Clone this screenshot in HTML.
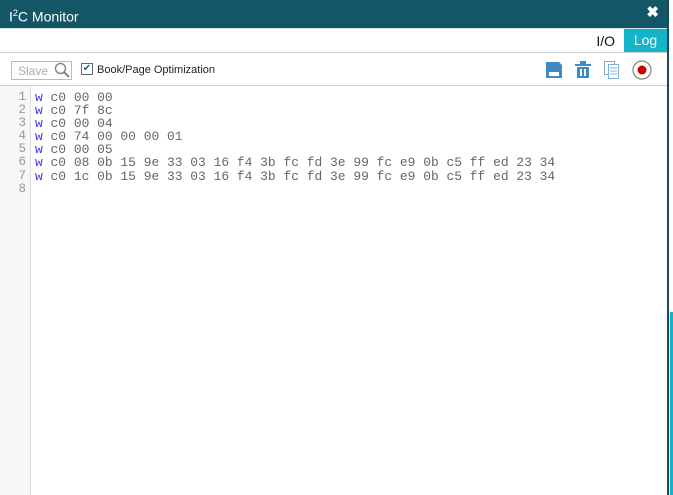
<!DOCTYPE html>
<html><head><style>
body{margin:0;width:673px;height:495px;overflow:hidden;background:#fff;position:relative;font-family:"Liberation Sans",sans-serif}
.win{position:absolute;left:0;top:0;width:667px;height:495px;border-right:2px solid #1a4a55;background:#fff}
.title{height:28px;background:#135666;color:#fff;font-size:14px;line-height:26px;padding-left:9px}
.title sup{font-size:9px}
.x{position:absolute;right:8px;top:0;font-size:15px;font-weight:bold;color:#fff}
.tabs{position:absolute;top:28px;left:0;right:0;height:23px;border-top:1px solid #cfe5ea;border-bottom:1px solid #ccc;background:#fff}
.io{position:absolute;right:52px;top:4px;font-size:14px;color:#111}
.log{position:absolute;right:0;top:0;width:43px;height:23px;background:#14b4c9;color:#fff;font-size:14px;line-height:23px;text-align:center}
.tool{position:absolute;top:53px;left:0;right:0;height:32px;border-bottom:1px solid #ccc}
.slave{position:absolute;left:11px;top:8px;width:61px;height:19px;border:1px solid #bbb;font-size:12px;color:#aaa;line-height:19px;padding-left:6px;box-sizing:border-box}
.cb{position:absolute;left:81px;top:10px;width:10px;height:10px;border:1px solid #666;font-size:10px;line-height:10px;color:#1a5f8a;text-align:center}
.cbl{position:absolute;left:97px;top:11px;font-size:11px;color:#222}
.gut{position:absolute;left:0;top:86px;width:30px;bottom:0;background:#f7f7f7;border-right:1px solid #ddd}
.code{position:absolute;top:91px;font-family:"Liberation Mono",monospace;font-size:12.95px;line-height:13.1px;white-space:pre;color:#666}
.code b{font-weight:normal;color:#3b3bf0}
</style></head><body>
<div class="win">
<div class="title">I<sup>2</sup>C Monitor<span class="x">✖</span></div>
<div class="tabs"><span class="io">I/O</span><div class="log">Log</div></div>
<div class="tool">
<div class="slave">Slave</div>
<svg style="position:absolute;left:54px;top:9px" width="16" height="16"><circle cx="6.5" cy="6.5" r="5" fill="none" stroke="#888" stroke-width="1.5"/><line x1="10" y1="10" x2="15" y2="15" stroke="#888" stroke-width="2"/></svg>
<div class="cb">✔</div><span class="cbl">Book/Page Optimization</span>
<svg style="position:absolute;left:546px;top:9px" width="16" height="16"><path d="M0 0h13l3 3v13H0z" fill="#3d8ac7"/><rect x="3" y="10" width="10" height="4" fill="#fff"/></svg>
<svg style="position:absolute;left:575px;top:8px" width="16" height="17"><rect x="0" y="3" width="16" height="2" fill="#3d8ac7"/><rect x="5" y="0" width="6" height="3" fill="#3d8ac7"/><path d="M2 6h12v11H2z" fill="#3d8ac7"/><rect x="5" y="8" width="2" height="7" fill="#fff"/><rect x="9" y="8" width="2" height="7" fill="#fff"/></svg>
<svg style="position:absolute;left:604px;top:8px" width="15" height="18"><rect x="0.5" y="0.5" width="10" height="13" fill="#fff" stroke="#7fb1da"/><rect x="4.5" y="3.5" width="10" height="14" fill="#fff" stroke="#7fb1da"/><path d="M6 7h7M6 10h7M6 13h7" stroke="#7fb1da"/></svg>
<svg style="position:absolute;left:632px;top:7px" width="20" height="20"><circle cx="10" cy="10" r="9" fill="#fff" stroke="#888" stroke-width="1.3"/><circle cx="10" cy="10" r="4.5" fill="#c00"/></svg>
</div>
<div class="gut"></div>
<div class="code" style="left:6px;color:#999;text-align:right;width:20px;font-size:12.5px">1
2
3
4
5
6
7
8</div>
<div class="code" style="left:35px"><b>w</b> c0 00 00
<b>w</b> c0 7f 8c
<b>w</b> c0 00 04
<b>w</b> c0 74 00 00 00 01
<b>w</b> c0 00 05
<b>w</b> c0 08 0b 15 9e 33 03 16 f4 3b fc fd 3e 99 fc e9 0b c5 ff ed 23 34
<b>w</b> c0 1c 0b 15 9e 33 03 16 f4 3b fc fd 3e 99 fc e9 0b c5 ff ed 23 34
</div>
</div>
<div style="position:absolute;left:670px;top:312px;width:3px;height:183px;background:#14b4c9"></div>
</body></html>
